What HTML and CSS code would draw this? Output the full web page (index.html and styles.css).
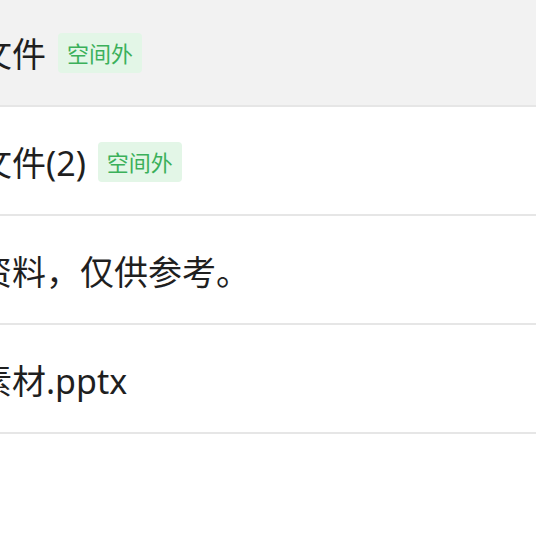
FILE: index.html
```html
<!DOCTYPE html>
<html lang="zh-CN">
<head>
    <meta charset="UTF-8">
    <meta name="viewport" content="width=device-width, initial-scale=1.0">
    <title>文件列表</title>
    <link rel="stylesheet" href="styles.css">
</head>
<body>

<!-- file list -->
<div class="file-list">
    <div class="file-row active">
        <span class="file-name">文件</span>
        <span class="tag">空间外</span>
    </div>
    <div class="file-row">
        <span class="file-name">文件(2)</span>
        <span class="tag">空间外</span>
    </div>
    <div class="file-row">
        <span class="file-name">资料，仅供参考。</span>
    </div>
    <div class="file-row">
        <span class="file-name">素材.pptx</span>
    </div>
</div>

</body>
</html>
```

FILE: styles.css
```css
body {
    margin: 0;
    background-color: #ffffff;
    font-family: "Noto Sans", "Noto Sans CJK SC", sans-serif;
    color: #1f1f1f;
    overflow: hidden;
}
.file-list {
    margin-top: -2px;
    margin-left: -22px;
}
.file-row {
    display: flex;
    align-items: center;
    gap: 12px;
    height: 107px;
    border-bottom: 2px solid #e6e6e6;
    background-color: #ffffff;
}
.file-row.active {
    background-color: #f2f2f2;
}
.file-name {
    font-size: 34px;
    line-height: 40px;
    padding-top: 4px;
}
.tag {
    font-size: 22px;
    line-height: 40px;
    padding: 0 9px;
    color: #3bb05a;
    background-color: #e3f6e7;
    border-radius: 4px;
    margin-top: 2px;
}
```
